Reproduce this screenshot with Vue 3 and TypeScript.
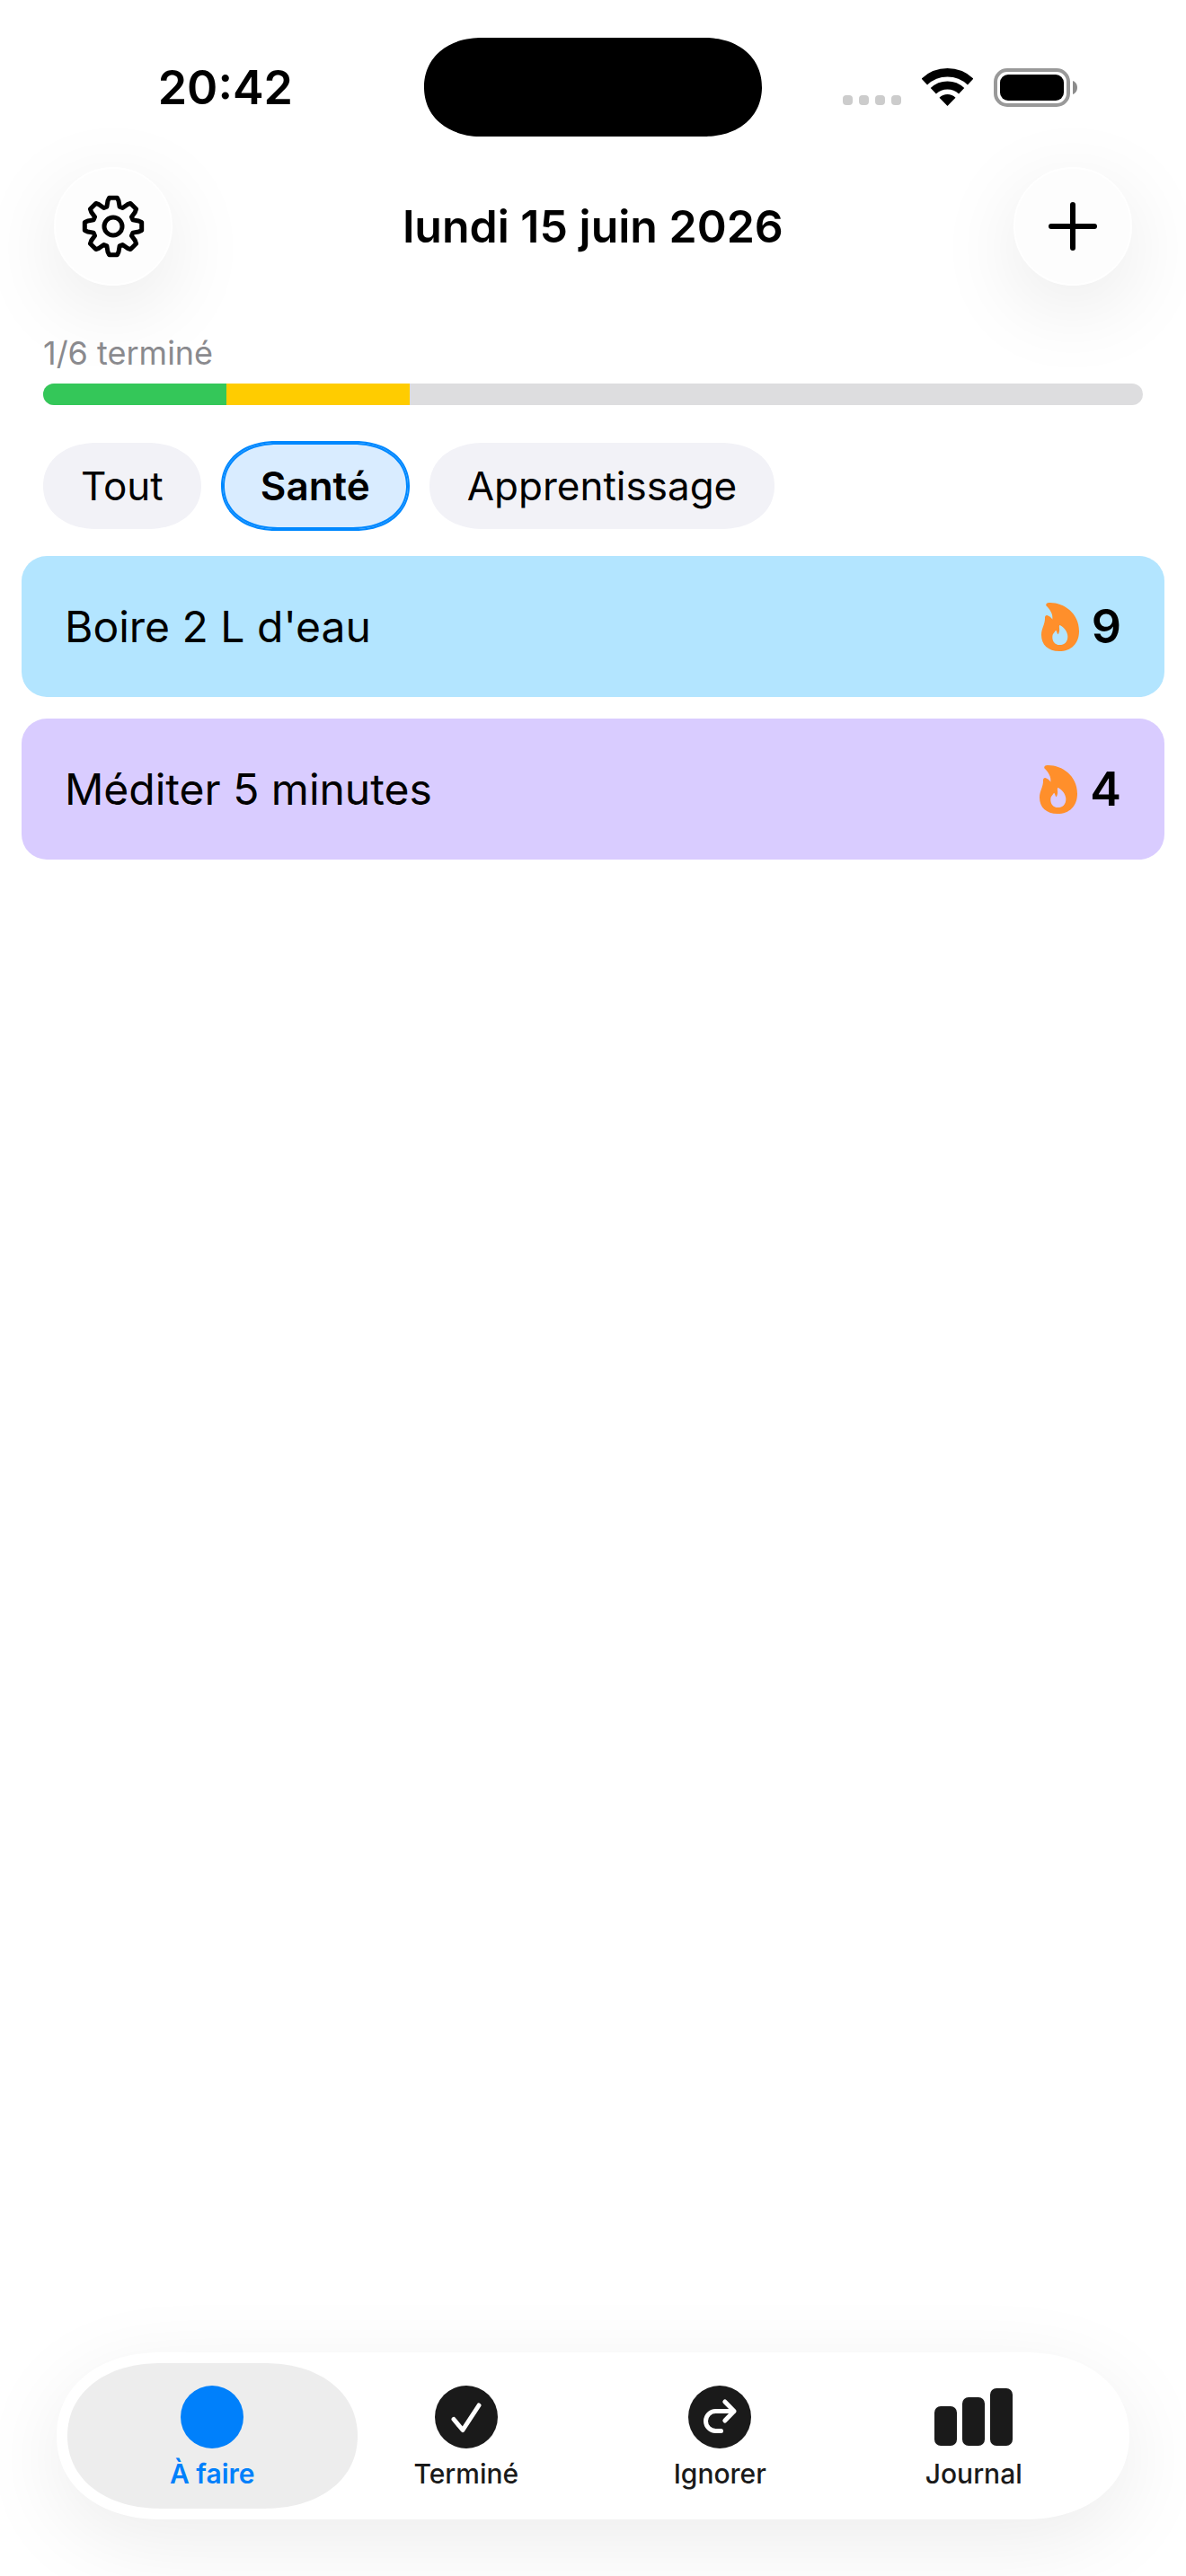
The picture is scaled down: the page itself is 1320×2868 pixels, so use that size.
<script setup lang="ts">
import { computed, ref } from 'vue'

type TabIcon = 'circle' | 'check' | 'skip' | 'bars'

interface Category {
  id: string
  label: string
}

interface Habit {
  id: number
  title: string
  streak: number
  tone: 'sky' | 'lilac'
}

interface Tab {
  id: string
  label: string
  icon: TabIcon
}

const categories: Category[] = [
  { id: 'all', label: 'Tout' },
  { id: 'health', label: 'Santé' },
  { id: 'learning', label: 'Apprentissage' },
]

const habits: Habit[] = [
  { id: 1, title: "Boire 2 L d'eau", streak: 9, tone: 'sky' },
  { id: 2, title: 'Méditer 5 minutes', streak: 4, tone: 'lilac' },
]

const tabs: Tab[] = [
  { id: 'todo', label: 'À faire', icon: 'circle' },
  { id: 'done', label: 'Terminé', icon: 'check' },
  { id: 'skipped', label: 'Ignorer', icon: 'skip' },
  { id: 'journal', label: 'Journal', icon: 'bars' },
]

const activeCategory = ref('health')
const activeTab = ref('todo')

const total = 6
const done = 1
const skipped = 1
const doneWidth = computed(() => `${(done / total) * 100}%`)
const skippedWidth = computed(() => `${(skipped / total) * 100}%`)

// Outline of the eight-toothed settings gear: [angle from tooth axis, radius]
const toothProfile: [number, number][] = [
  [-18, 23],
  [-12, 29],
  [-8, 32],
  [8, 32],
  [12, 29],
  [18, 23],
]
const gearPath = computed(() => {
  const points: string[] = []
  for (let tooth = 0; tooth < 8; tooth++) {
    for (const [offset, radius] of toothProfile) {
      const angle = ((tooth * 45 + offset) * Math.PI) / 180
      points.push(`${(35 + radius * Math.sin(angle)).toFixed(2)} ${(35 - radius * Math.cos(angle)).toFixed(2)}`)
    }
  }
  return `M${points.join('L')}Z`
})
</script>

<template>
  <div class="screen">
    <div class="status">
      <div class="status-left">
        <span class="time">20:42</span>
      </div>
      <div class="island"></div>
      <div class="status-right">
        <span class="signal"><i v-for="n in 4" :key="n"></i></span>
        <svg class="wifi" viewBox="0 0 171 126" aria-hidden="true">
          <path d="M8.5 45A112 112 0 0 1 162.500 45" fill="none" stroke="#000" stroke-width="28" />
          <path d="M38.500 76A68.500 68.500 0 0 1 132.500 76" fill="none" stroke="#000" stroke-width="27" />
          <path d="M85.500 126L58.500 98A39 39 0 0 1 112.500 98Z" />
        </svg>
        <svg class="battery" viewBox="0 0 94 43" aria-hidden="true">
          <rect x="2" y="2" width="81" height="39" rx="13" fill="none" stroke="#999" stroke-width="4" />
          <rect x="7" y="7" width="71" height="29" rx="9" />
          <path d="M88 14C91 15 93 18 93 21.500S91 28 88 29Z" fill="#8c8c8c" />
        </svg>
      </div>
    </div>

    <header class="header">
      <button class="round" type="button" aria-label="Réglages">
        <svg class="gear" viewBox="0 0 70 70" fill="none" stroke="#000" stroke-width="5" stroke-linejoin="round" aria-hidden="true">
          <path :d="gearPath" />
          <circle cx="35" cy="35" r="10" />
        </svg>
      </button>
      <h1 class="title">lundi 15 juin 2026</h1>
      <button class="round" type="button" aria-label="Ajouter">
        <svg class="plus" viewBox="0 0 54 54" fill="none" stroke="#000" stroke-width="6" stroke-linecap="round" aria-hidden="true">
          <path d="M27 3V51M3 27H51" />
        </svg>
      </button>
    </header>

    <main class="content">
      <section class="progress">
        <p class="progress-label">{{ done }}/{{ total }} terminé</p>
        <div class="track" role="progressbar" aria-label="Progression" aria-valuemin="0" :aria-valuemax="total" :aria-valuenow="done">
          <div class="fill-done" :style="{ width: doneWidth }"></div>
          <div class="fill-skipped" :style="{ width: skippedWidth }"></div>
        </div>
      </section>

      <div class="chips">
        <button
          v-for="category in categories"
          :key="category.id"
          type="button"
          class="chip"
          :class="{ active: category.id === activeCategory }"
          :aria-pressed="category.id === activeCategory"
          @click="activeCategory = category.id"
        >
          {{ category.label }}
        </button>
      </div>

      <ul class="habits">
        <li v-for="habit in habits" :key="habit.id" class="habit" :class="habit.tone">
          <span class="habit-title">{{ habit.title }}</span>
          <span class="streak">
            <svg class="flame" viewBox="0 0 126 162" aria-hidden="true">
              <path
                fill="#ff8f2b"
                fill-rule="evenodd"
                d="M16 5C18 1 23 0 30 0C75 0 126 35 126 95C126 136 100 162 60 162C22 162 0 140 0 108C0 84 13 72 12 50C12 42 18 40 24 44C32 48 36 53 37 56C39 38 30 25 19 13C16 10 15 7 16 5ZM62 75C76 82 88 98 88 113C88 131 77 141 61 141C45 141 36 128 37 113C38 101 45 99 48 92C51 92 52 102 56 106C60 100 61 92 60 84C59 78 60 75 62 75Z"
              />
            </svg>
            <span class="streak-count">{{ habit.streak }}</span>
          </span>
        </li>
      </ul>
    </main>

    <nav class="tabbar" aria-label="Navigation">
      <button
        v-for="tab in tabs"
        :key="tab.id"
        type="button"
        class="tab"
        :class="{ active: tab.id === activeTab }"
        @click="activeTab = tab.id"
      >
        <svg v-if="tab.icon === 'bars'" class="tab-icon bars" viewBox="0 0 88 70" fill="currentColor" aria-hidden="true">
          <rect x="0" y="23" width="25" height="44" rx="7" />
          <rect x="31" y="13" width="25" height="54" rx="7" />
          <rect x="62" y="3" width="25" height="64" rx="7" />
        </svg>
        <svg v-else class="tab-icon" viewBox="0 0 70 70" aria-hidden="true">
          <circle cx="35" cy="35" r="35" fill="currentColor" />
          <g fill="none" stroke="#fff" stroke-width="5" stroke-linecap="round" stroke-linejoin="round">
            <path v-if="tab.icon === 'check'" d="M21 37.500L31 49.500L49 22" />
            <path v-else-if="tab.icon === 'skip'" d="M36.500 50.500H30.500A10.800 10.800 0 0 1 30.500 28.500H51M40.800 18L51 28.500L40.800 39" />
          </g>
        </svg>
        <span class="tab-label">{{ tab.label }}</span>
      </button>
    </nav>
  </div>
</template>

<style>
body {
  margin: 0;
  background: #fff;
}
</style>

<style scoped>
.screen {
  box-sizing: border-box;
  display: flex;
  flex-direction: column;
  min-height: 100vh;
  padding-bottom: 63px;
  overflow: hidden;
  background: #fff;
  color: #000;
  font-family: Inter, "Liberation Sans", sans-serif;
}

button {
  margin: 0;
  padding: 0;
  border: 0;
  background: none;
  color: inherit;
  font: inherit;
  cursor: pointer;
}

.status {
  display: grid;
  grid-template-columns: 1fr 376px 1fr;
  align-items: center;
  padding-top: 42px;
}

.status-left {
  display: flex;
  justify-content: flex-end;
  padding: 2px 146px 0 0;
}

.time {
  font-size: 52px;
  line-height: 60px;
  font-weight: 600;
}

.island {
  height: 110px;
  border-radius: 64px / 55px;
  corner-shape: superellipse(1.1);
  background: #000;
}

.status-right {
  display: flex;
  align-items: center;
  padding-left: 90px;
}

.signal {
  display: flex;
  gap: 7px;
  align-self: flex-end;
  margin-bottom: 2px;
}

.signal i {
  width: 11px;
  height: 11px;
  border-radius: 4px;
  background: #ccc;
}

.wifi {
  width: 57px;
  height: 42px;
  margin-left: 23px;
}

.battery {
  width: 94px;
  height: 43px;
  margin-left: 23px;
}

.header {
  display: flex;
  align-items: center;
  justify-content: space-between;
  margin-top: 34px;
  padding: 0 60px;
}

.round {
  box-sizing: border-box;
  display: flex;
  align-items: center;
  justify-content: center;
  width: 132px;
  height: 132px;
  border: 2px solid #fff;
  border-radius: 50%;
  background: #fdfdfd;
  box-shadow: 0 24px 96px rgba(0, 0, 0, 0.09);
}

.gear {
  width: 70px;
  height: 70px;
}

.plus {
  width: 54px;
  height: 54px;
}

.title {
  margin: 0;
  font-size: 50px;
  line-height: 60px;
  font-weight: 600;
}

.content {
  position: relative;
  display: flex;
  flex-direction: column;
}

.progress {
  margin-top: 53px;
  padding: 0 48px;
}

.progress-label {
  margin: 0 0 12px;
  color: #8a8a8e;
  font-size: 36px;
  line-height: 44px;
}

.track {
  display: flex;
  height: 24px;
  overflow: hidden;
  border-radius: 12px;
  background: #dddddf;
}

.fill-done {
  background: #34c759;
}

.fill-skipped {
  background: #fc0;
}

.chips {
  display: flex;
  gap: 24px;
  margin-top: 42px;
  padding: 0 48px;
}

.chip {
  height: 96px;
  padding: 0 42px;
  border-radius: 60px / 48px;
  corner-shape: superellipse(1.1);
  background: #f2f2f7;
  font-size: 44px;
  line-height: 54px;
  white-space: nowrap;
}

.chip.active {
  background: #d9ecff;
  box-shadow: 0 0 0 2px #08f, inset 0 0 0 2px #08f;
  font-weight: 600;
}

.habits {
  display: flex;
  flex-direction: column;
  gap: 24px;
  margin: 30px 0 0;
  padding: 0 24px;
  list-style: none;
}

.habit {
  display: flex;
  align-items: center;
  justify-content: space-between;
  height: 157px;
  padding: 0 48px;
  border-radius: 28px;
  font-size: 48px;
  line-height: 60px;
}

.habit.sky {
  background: #b3e5ff;
}

.habit.lilac {
  background: #d9ccff;
}

.streak {
  display: flex;
  align-items: center;
  gap: 14px;
}

.flame {
  width: 42px;
  height: 54px;
}

.streak-count {
  font-size: 52px;
  font-weight: 600;
}

.tabbar {
  display: flex;
  margin: auto 63px 0;
  padding: 12px 32px;
  border-radius: 116px / 93px;
  corner-shape: superellipse(1.1);
  background: #fff;
  box-shadow: 0 24px 96px rgba(0, 0, 0, 0.08);
}

.tab {
  position: relative;
  display: flex;
  flex: 1;
  flex-direction: column;
  align-items: center;
  height: 162px;
  padding-top: 25px;
  color: #1a1a1a;
}

.tab.active {
  color: #0080fb;
}

.tab.active::before {
  content: "";
  position: absolute;
  inset: 0 -20px;
  border-radius: 104px / 81px;
  corner-shape: superellipse(1.1);
  background: #ededed;
}

.tab-icon {
  position: relative;
  width: 70px;
  height: 70px;
}

.tab-icon.bars {
  width: 88px;
}

.tab-label {
  position: relative;
  margin-top: 10px;
  font-size: 30px;
  line-height: 36px;
  font-weight: 500;
}

.tab.active .tab-label {
  font-weight: 600;
}
</style>
